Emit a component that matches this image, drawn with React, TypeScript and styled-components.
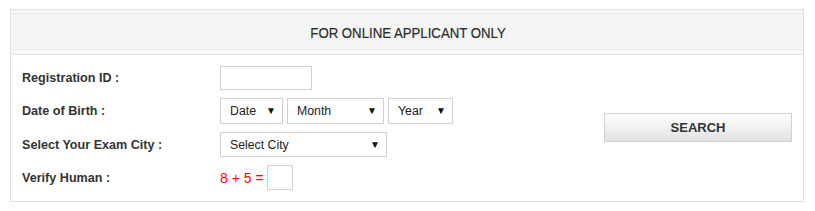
import React from 'react';
import styled, { createGlobalStyle } from 'styled-components';

const GlobalStyle = createGlobalStyle`
  html, body {
    margin: 0;
    padding: 0;
    background: #ffffff;
  }
  body {
    font-family: 'Liberation Sans', Arial, sans-serif;
    color: #333;
  }
`;

const Page = styled.div`
  padding: 9px 0 0 10px;
`;

const Panel = styled.div`
  width: 792px;
  border: 1px solid #e0e0e0;
  background: #fff;
`;

const Header = styled.div`
  height: 44px;
  background: #f4f4f4;
  border-bottom: 1px solid #e3e3e3;
  box-shadow: inset 0 3px 0 #f7f7f7, inset 0 4px 0 #ececec, inset 0 -4px 0 #f7f7f7,
    inset 0 -5px 0 #ececec;
  display: flex;
  align-items: center;
  justify-content: center;
`;

// the original uses a condensed webfont; squeeze Arial a little to match its shape
const HeaderTitle = styled.span`
  display: inline-block;
  font-family: 'Liberation Sans', Arial, sans-serif;
  font-size: 15px;
  color: #2a2a2a;
  -webkit-text-stroke: 0.2px #2a2a2a;
  transform: scaleX(0.88);
  margin-left: 2px;
`;

const Body = styled.div`
  display: flex;
  align-items: center;
  padding: 11px;
`;

const Form = styled.div`
  display: grid;
  grid-template-columns: 198px auto;
  row-gap: 8px;
  align-items: center;
  width: 582px;
`;

const Label = styled.div`
  font-size: 12.6px;
  font-weight: bold;
  color: #333;
`;

const Field = styled.div<{ $gap?: number }>`
  display: flex;
  align-items: center;
  gap: ${(p) => p.$gap ?? 4}px;
`;

const TextBox = styled.input<{ $w: number; $h: number }>`
  box-sizing: border-box;
  width: ${(p) => p.$w}px;
  height: ${(p) => p.$h}px;
  border: 1px solid #d0d0d0;
  padding: 0 6px;
  font-family: 'Liberation Sans', Arial, sans-serif;
  font-size: 12px;
  outline: none;
  margin: 0;
`;

const SelectBox = styled.div<{ $w: number; $h: number }>`
  box-sizing: border-box;
  width: ${(p) => p.$w}px;
  height: ${(p) => p.$h}px;
  border: 1px solid #d0d0d0;
  display: flex;
  align-items: center;
  padding: 0 6px 0 9px;
  background: #fff;
`;

const NativeSelect = styled.select`
  appearance: none;
  -webkit-appearance: none;
  flex: 1;
  min-width: 0;
  border: none;
  background: transparent;
  padding: 0;
  margin: 0;
  font-family: 'Liberation Sans', Arial, sans-serif;
  font-size: 12.3px;
  color: #222;
  outline: none;
`;

const Arrow = styled.span`
  font-size: 10px;
  color: #111;
  pointer-events: none;
  line-height: 1;
`;

const Captcha = styled.span`
  font-size: 14px;
  color: #f00;
`;

const ButtonArea = styled.div`
  flex: 1;
  display: flex;
  justify-content: center;
`;

const SearchButton = styled.button`
  width: 188px;
  height: 29px;
  border: 1px solid #cfcfcf;
  background: linear-gradient(to bottom, #ffffff 0%, #f1f1f1 50%, #e1e1e1 100%);
  font-family: 'Liberation Sans', Arial, sans-serif;
  font-size: 13px;
  font-weight: bold;
  color: #333;
  cursor: pointer;
  margin: -2px 0 0 10px;
`;

type Opt = { w: number; h: number; placeholder: string };

const Dropdown: React.FC<Opt> = ({ w, h, placeholder }) => (
  <SelectBox $w={w} $h={h}>
    <NativeSelect defaultValue="">
      <option value="">{placeholder}</option>
    </NativeSelect>
    <Arrow>▼</Arrow>
  </SelectBox>
);

export default function App() {
  return (
    <Page>
      <GlobalStyle />
      <Panel>
        <Header>
          <HeaderTitle>FOR ONLINE APPLICANT ONLY</HeaderTitle>
        </Header>
        <Body>
          <Form>
            <Label>Registration ID :</Label>
            <Field>
              <TextBox $w={92} $h={24} type="text" />
            </Field>

            <Label>Date of Birth :</Label>
            <Field>
              <Dropdown w={63} h={26} placeholder="Date" />
              <Dropdown w={97} h={26} placeholder="Month" />
              <Dropdown w={65} h={26} placeholder="Year" />
            </Field>

            <Label>Select Your Exam City :</Label>
            <Field>
              <Dropdown w={167} h={25} placeholder="Select City" />
            </Field>

            <Label>Verify Human :</Label>
            <Field $gap={3}>
              <Captcha>8 + 5 =</Captcha>
              <TextBox $w={26} $h={25} type="text" />
            </Field>
          </Form>
          <ButtonArea>
            <SearchButton type="button">SEARCH</SearchButton>
          </ButtonArea>
        </Body>
      </Panel>
    </Page>
  );
}
